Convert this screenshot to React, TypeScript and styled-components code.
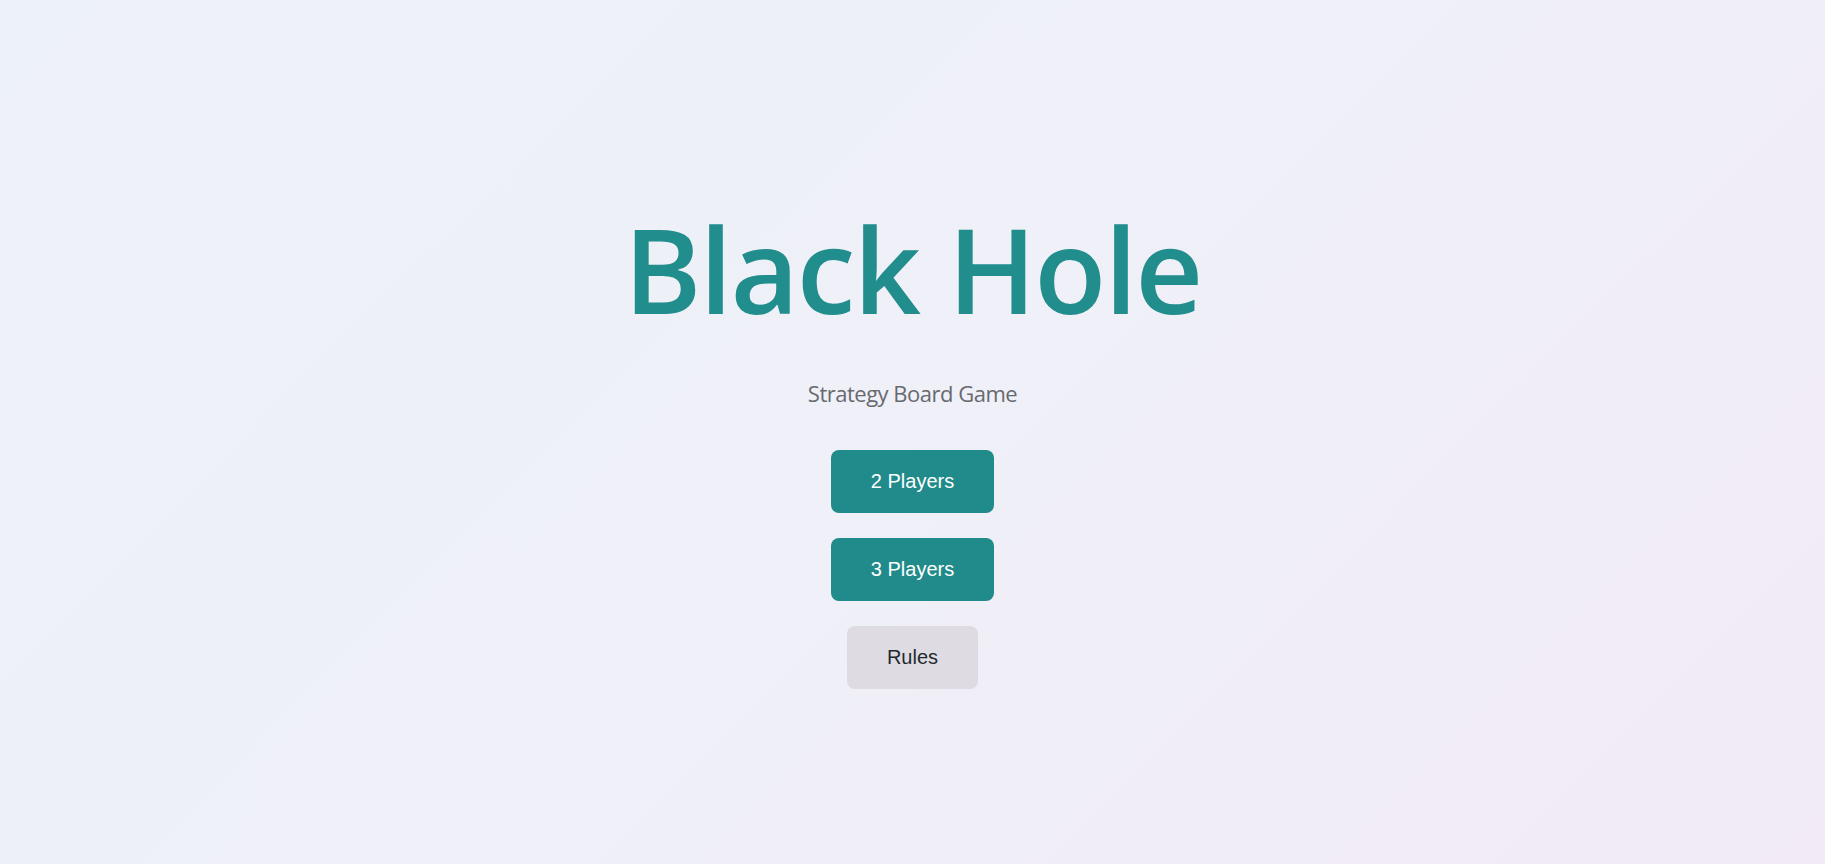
import React from "react";
import styled, { createGlobalStyle } from "styled-components";

const GlobalStyle = createGlobalStyle`
  * { box-sizing: border-box; }
  html, body { margin: 0; padding: 0; }
  body {
    min-height: 100vh;
    background: linear-gradient(135deg, #edf1f8 0%, #eff0f8 50%, #f2eaf7 100%);
    font-family: "Open Sans", "Noto Sans", sans-serif;
  }
`;

const Page = styled.main`
  min-height: 100vh;
  display: flex;
  flex-direction: column;
  align-items: center;
  padding-top: 209px;
`;

const Title = styled.h1`
  margin: 0;
  font-family: "Open Sans", "Noto Sans", sans-serif;
  font-weight: 550;
  font-size: 118px;
  line-height: 120px;
  letter-spacing: -2px;
  color: #218d8c;
`;

const Subtitle = styled.p`
  margin: 51px 0 0;
  font-family: "Open Sans", "Noto Sans", sans-serif;
  font-size: 22px;
  line-height: 26px;
  letter-spacing: -0.5px;
  color: #676a6e;
`;

const Menu = styled.nav`
  margin-top: 44px;
  display: flex;
  flex-direction: column;
  align-items: center;
  gap: 25px;
`;

const MenuButton = styled.button<{ $variant?: "primary" | "secondary" }>`
  border: none;
  border-radius: 8px;
  padding: 20px 40px;
  font-family: "Liberation Sans", Arial, sans-serif;
  font-size: 20px;
  line-height: 23px;
  cursor: pointer;
  background: ${(p) => (p.$variant === "secondary" ? "#dedce2" : "#208b8a")};
  color: ${(p) => (p.$variant === "secondary" ? "#1f2a2e" : "#ffffff")};
`;

export default function App() {
  return (
    <>
      <GlobalStyle />
      <Page>
        <Title>Black Hole</Title>
        <Subtitle>Strategy Board Game</Subtitle>
        <Menu>
          <MenuButton>2 Players</MenuButton>
          <MenuButton>3 Players</MenuButton>
          <MenuButton $variant="secondary">Rules</MenuButton>
        </Menu>
      </Page>
    </>
  );
}
